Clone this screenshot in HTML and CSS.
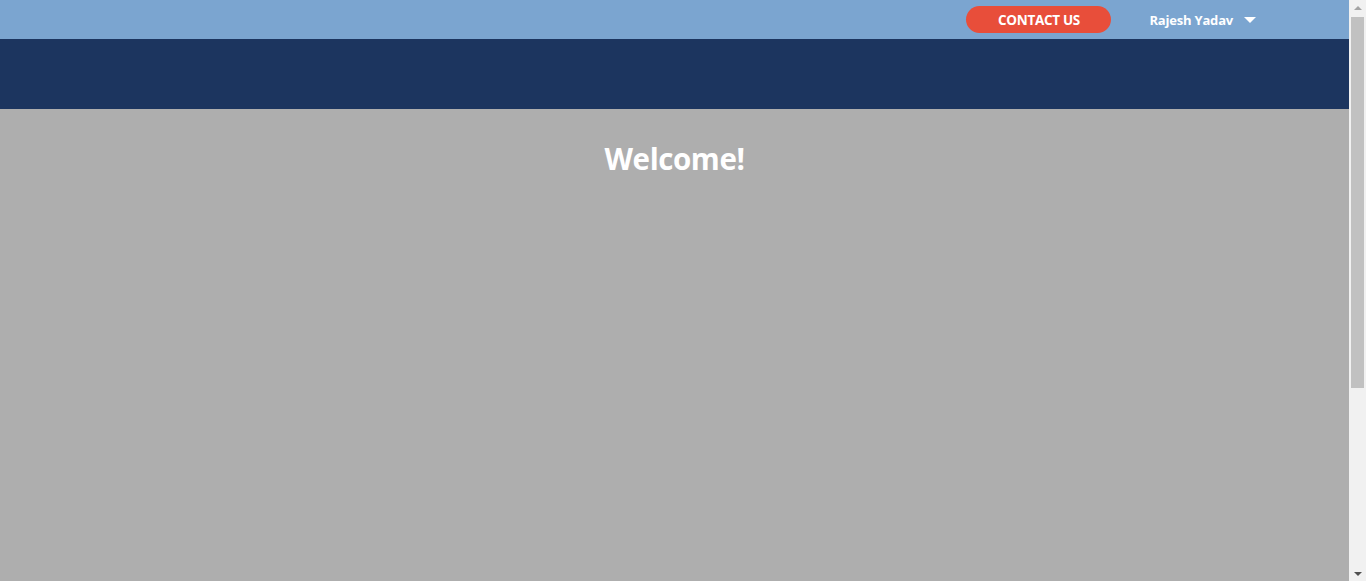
FILE: index.html
```html
<!DOCTYPE html>
<html>
<head>
<meta charset="utf-8">
<link rel="stylesheet" href="styles.css">
</head>
<body>
<header class="topbar">
  <div class="topbar-inner">
    <a class="contact-btn" href="#">CONTACT US</a>
    <div class="user">
      <span class="user-name">Rajesh Yadav</span>
      <span class="caret"></span>
    </div>
  </div>
</header>
<div class="band"></div>
<main class="main">
  <h1 class="welcome">Welcome!</h1>
</main>
<div class="fake-scrollbar">
  <span class="sb-arrow sb-up"></span>
  <span class="sb-thumb"></span>
  <span class="sb-arrow sb-down"></span>
</div>
</body>
</html>
```
FILE: styles.css
```css
html, body {
  margin: 0;
  padding: 0;
}
body {
  font-family: "Open Sans", "Noto Sans", "Liberation Sans", sans-serif;
  background: #aeaeae;
  margin-right: 17px;
}
.topbar {
  height: 39px;
  background: #7ba5d0;
}
.topbar-inner {
  display: flex;
  align-items: center;
  justify-content: flex-end;
  height: 100%;
  padding-right: 93px;
}
.contact-btn {
  display: flex;
  align-items: center;
  justify-content: center;
  width: 145px;
  height: 27px;
  border-radius: 14px;
  background: #e84e3a;
  color: #fff;
  font-weight: 700;
  font-size: 13.5px;
  text-decoration: none;
  letter-spacing: -0.3px;
}
.user {
  display: flex;
  align-items: center;
  margin-left: 38px;
  color: #fff;
  font-weight: 700;
  font-size: 13px;
  letter-spacing: -0.2px;
}
.caret {
  width: 0;
  height: 0;
  margin-left: 11px;
  border-left: 6px solid transparent;
  border-right: 6px solid transparent;
  border-top: 6px solid #fff;
}
.band {
  height: 70px;
  background: #1c355f;
}
.main {
  min-height: 775px;
  padding-top: 29px;
}
.welcome {
  margin: 0;
  text-align: center;
  color: #fff;
  font-size: 29.5px;
  font-weight: 700;
  letter-spacing: -0.4px;
}
.fake-scrollbar {
  position: fixed;
  top: 0;
  right: 0;
  bottom: 0;
  width: 17px;
  background: #f1f1f1;
  display: flex;
  flex-direction: column;
  align-items: center;
}
.sb-arrow {
  width: 0;
  height: 0;
  border-left: 4px solid transparent;
  border-right: 4px solid transparent;
}
.sb-up {
  margin-top: 6px;
  border-bottom: 4px solid #a3a3a3;
}
.sb-thumb {
  width: 13px;
  height: 371px;
  margin-top: 7px;
  background: #c1c1c1;
}
.sb-down {
  margin-top: auto;
  margin-bottom: 5px;
  border-top: 4px solid #505050;
}
```
